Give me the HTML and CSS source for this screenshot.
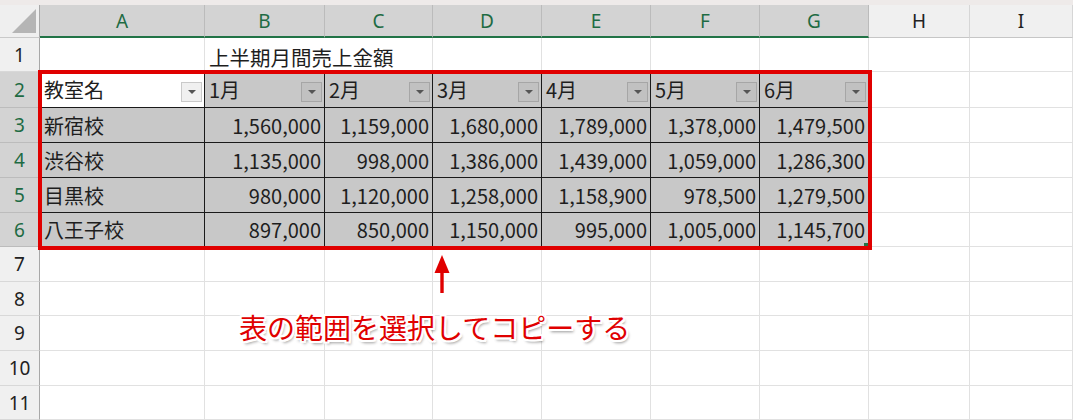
FILE: index.html
```html
<!DOCTYPE html>
<html lang="ja">
<head>
	<meta charset="utf-8">
	<link rel="stylesheet" href="styles.css">
</head>
<body>
	<div class="page">
		<div class="strip"></div>
		<div class="sheet">
			<div class="corner"><span class="tri"></span></div>
			<div class="ch sel">A</div>
			<div class="ch sel">B</div>
			<div class="ch sel">C</div>
			<div class="ch sel">D</div>
			<div class="ch sel">E</div>
			<div class="ch sel">F</div>
			<div class="ch sel">G</div>
			<div class="ch">H</div>
			<div class="ch">I</div>

			<div class="rh">1</div>
			<div class="c"></div>
			<div class="c title">上半期月間売上金額</div>
			<div class="c"></div>
			<div class="c"></div>
			<div class="c"></div>
			<div class="c"></div>
			<div class="c"></div>
			<div class="c"></div>
			<div class="c"></div>

			<div class="rh sel">2</div>
			<div class="t hd active">教室名<span class="dd"></span></div>
			<div class="t hd">1月<span class="dd"></span></div>
			<div class="t hd">2月<span class="dd"></span></div>
			<div class="t hd">3月<span class="dd"></span></div>
			<div class="t hd">4月<span class="dd"></span></div>
			<div class="t hd">5月<span class="dd"></span></div>
			<div class="t hd last">6月<span class="dd"></span></div>
			<div class="c"></div>
			<div class="c"></div>

			<div class="rh sel">3</div>
			<div class="t">新宿校</div>
			<div class="t num">1,560,000</div>
			<div class="t num">1,159,000</div>
			<div class="t num">1,680,000</div>
			<div class="t num">1,789,000</div>
			<div class="t num">1,378,000</div>
			<div class="t num last">1,479,500</div>
			<div class="c"></div>
			<div class="c"></div>

			<div class="rh sel">4</div>
			<div class="t">渋谷校</div>
			<div class="t num">1,135,000</div>
			<div class="t num">998,000</div>
			<div class="t num">1,386,000</div>
			<div class="t num">1,439,000</div>
			<div class="t num">1,059,000</div>
			<div class="t num last">1,286,300</div>
			<div class="c"></div>
			<div class="c"></div>

			<div class="rh sel">5</div>
			<div class="t">目黒校</div>
			<div class="t num">980,000</div>
			<div class="t num">1,120,000</div>
			<div class="t num">1,258,000</div>
			<div class="t num">1,158,900</div>
			<div class="t num">978,500</div>
			<div class="t num last">1,279,500</div>
			<div class="c"></div>
			<div class="c"></div>

			<div class="rh sel">6</div>
			<div class="t bottom">八王子校</div>
			<div class="t num bottom">897,000</div>
			<div class="t num bottom">850,000</div>
			<div class="t num bottom">1,150,000</div>
			<div class="t num bottom">995,000</div>
			<div class="t num bottom">1,005,000</div>
			<div class="t num bottom last">1,145,700</div>
			<div class="c"></div>
			<div class="c"></div>

			<div class="rh">7</div>
			<div class="c"></div><div class="c"></div><div class="c"></div><div class="c"></div><div class="c"></div><div class="c"></div><div class="c"></div><div class="c"></div><div class="c"></div>
			<div class="rh">8</div>
			<div class="c"></div><div class="c"></div><div class="c"></div><div class="c"></div><div class="c"></div><div class="c"></div><div class="c"></div><div class="c"></div><div class="c"></div>
			<div class="rh">9</div>
			<div class="c"></div><div class="c"></div><div class="c"></div><div class="c"></div><div class="c"></div><div class="c"></div><div class="c"></div><div class="c"></div><div class="c"></div>
			<div class="rh">10</div>
			<div class="c"></div><div class="c"></div><div class="c"></div><div class="c"></div><div class="c"></div><div class="c"></div><div class="c"></div><div class="c"></div><div class="c"></div>
			<div class="rh">11</div>
			<div class="c"></div><div class="c"></div><div class="c"></div><div class="c"></div><div class="c"></div><div class="c"></div><div class="c"></div><div class="c"></div><div class="c"></div>
		</div>

		<!-- annotation layer -->
		<div class="handle"></div>
		<div class="frame"></div>
		<svg class="arrow" width="20" height="42" viewBox="0 0 20 42">
			<path d="M10 0 L17.5 18 L2.5 18 Z" fill="#e00000"/>
			<rect x="8.3" y="16" width="3.4" height="22" fill="#e00000"/>
		</svg>
		<div class="note">表の範囲を選択してコピーする</div>
	</div>
</body>
</html>
```

FILE: styles.css
```css
body {
	margin: 0;
	background: #fff;
	font-family: "Noto Sans CJK JP", sans-serif;
	color: #1e1e1e;
}

.page {
	position: relative;
	width: 1073px;
	height: 420px;
	overflow: hidden;
}

.strip {
	height: 5px;
	background: #eeeae9;
}

.sheet {
	display: grid;
	grid-template-columns: 40px 165px 120px 108px 109px 109px 109px 109px 101px 1fr;
	grid-template-rows: 33px 34px 36px 35px 35px 35px 34px 35px 34px 35px 35px 34px;
}

.sheet > div {
	box-sizing: border-box;
	min-width: 0;
}

.corner {
	background: #efefef;
	border-right: 1px solid #a8a8a8;
	border-bottom: 1px solid #c9c9c9;
	display: flex;
	align-items: flex-end;
	justify-content: flex-end;
	padding: 0 3px 4px 0;
}

.tri {
	width: 0;
	height: 0;
	border-left: 24px solid transparent;
	border-bottom: 24px solid #b5b5b5;
}

.ch {
	background: #f0f0f0;
	border-right: 1px solid #d6d6d6;
	border-bottom: 1px solid #c6c6c6;
	display: flex;
	align-items: center;
	justify-content: center;
	font-family: "Noto Sans", sans-serif;
	font-size: 19px;
	color: #222;
}

.ch.sel {
	background: #d3d3d3;
	border-right-color: #bbbbbb;
	border-bottom: 2px solid #217346;
	color: #1e6b43;
}

.rh {
	background: #f0f0f0;
	border-right: 1px solid #a8a8a8;
	border-bottom: 1px solid #d8d8d8;
	display: flex;
	align-items: center;
	justify-content: center;
	font-family: "Noto Sans", sans-serif;
	font-size: 19px;
	color: #222;
}

.rh.sel {
	background: #d3d3d3;
	border-bottom-color: #bcbcbc;
	color: #1e6b43;
}

.c {
	border-right: 1px solid #e1e1e1;
	border-bottom: 1px solid #e1e1e1;
}

.title {
	border-right-color: transparent;
	white-space: nowrap;
	overflow: visible;
	font-size: 20.5px;
	padding: 4px 0 0 4px;
}

.t {
	background: #c8c8c8;
	border-right: 1px solid #1a1a1a;
	border-bottom: 1px solid #1a1a1a;
	display: flex;
	align-items: center;
	padding: 0 4px;
	font-size: 20px;
	white-space: nowrap;
}

.t.num {
	justify-content: flex-end;
	padding-right: 3px;
}

.t.last {
	border-right-color: #c8c8c8;
}

.t.bottom {
	border-bottom-color: #c8c8c8;
}

.t.active {
	background: #fff;
}

.t.hd {
	padding-right: 2px;
}

.dd {
	margin-left: auto;
	align-self: flex-end;
	margin-bottom: 5px;
	width: 21px;
	height: 20px;
	box-sizing: border-box;
	border: 1px solid #a6a6a6;
	background: #c1c1c1;
	display: flex;
	align-items: center;
	justify-content: center;
}

.dd::after {
	content: "";
	width: 0;
	height: 0;
	border-left: 4px solid transparent;
	border-right: 4px solid transparent;
	border-top: 4px solid #555;
}

.active .dd {
	background: #f0f0f0;
	border-color: #cacaca;
}

.frame {
	position: absolute;
	left: 38px;
	top: 70px;
	width: 834px;
	height: 180px;
	box-sizing: border-box;
	border: 4px solid #e00000;
}

.handle {
	position: absolute;
	left: 864px;
	top: 243px;
	width: 4px;
	height: 4px;
	background: #217346;
}

.arrow {
	position: absolute;
	left: 432px;
	top: 255px;
}

.note {
	position: absolute;
	left: 239px;
	top: 307px;
	font-size: 28px;
	line-height: 40px;
	color: #e00000;
	white-space: nowrap;
	text-shadow:
		-2px -2px 0 #fff, 2px -2px 0 #fff, -2px 2px 0 #fff, 2px 2px 0 #fff,
		0 -2px 0 #fff, 0 2px 0 #fff, -2px 0 0 #fff, 2px 0 0 #fff,
		2px 3px 3px rgba(0, 0, 0, 0.45);
}
```
